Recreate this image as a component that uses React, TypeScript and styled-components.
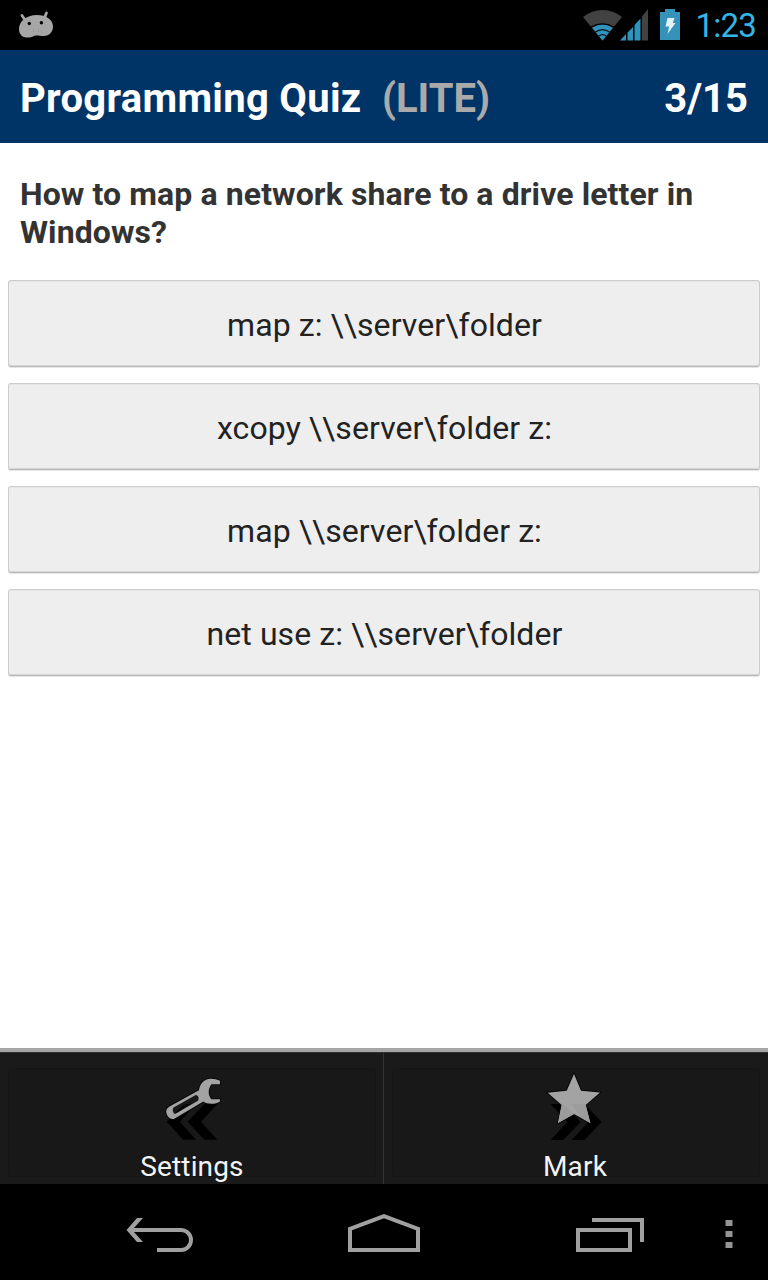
import React from "react";
import styled, { createGlobalStyle } from "styled-components";

const GlobalStyle = createGlobalStyle`
  * { box-sizing: border-box; }
  body { margin: 0; background: #fff; }
`;

const Screen = styled.div`
  width: 768px;
  height: 1280px;
  display: flex;
  flex-direction: column;
  background: #fff;
  font-family: Roboto, "Liberation Sans", sans-serif;
  overflow: hidden;
`;

const StatusBar = styled.div`
  height: 50px;
  flex: none;
  display: flex;
  align-items: center;
  justify-content: space-between;
  padding: 0 12px 0 10px;
  background: #000;
`;

const StatusIcons = styled.div`
  display: flex;
  align-items: center;
  gap: 12px;
`;

const Clock = styled.span`
  width: 64px;
  text-align: right;
  color: #33b5e5;
  font-size: 33px;
  line-height: 50px;
  letter-spacing: -0.8px;
  padding-top: 2px;
`;

const Icon = styled.svg`
  display: block;
  flex: none;
`;

const Header = styled.header`
  height: 93px;
  flex: none;
  display: flex;
  align-items: center;
  padding: 3px 20px 0;
  background: #003366;
  color: #fff;
  font-size: 40px;
  font-weight: 700;
`;

const Title = styled.span`
  letter-spacing: 0.3px;
`;

const Edition = styled.span`
  margin-left: 20.5px;
  color: #aaa;
`;

const Counter = styled.span`
  margin-left: auto;
`;

const Question = styled.h1`
  margin: 0;
  height: 129px;
  flex: none;
  padding: 32px 20px 0;
  color: #333;
  font-size: 32px;
  line-height: 38px;
  font-weight: 700;
  letter-spacing: 0.1px;
`;

const Answers = styled.div`
  flex: 1;
  display: flex;
  flex-direction: column;
  gap: 16px;
  padding: 8px 8px 0;
`;

const Answer = styled.button`
  height: 87px;
  flex: none;
  padding: 3px 0 0 1px;
  border: 1px solid #cdcdcd;
  border-bottom-color: #b9b9b9;
  border-radius: 3px;
  background: #eee;
  box-shadow: inset 0 1px 0 #e4e6e5, inset 0 -1px 0 #d6d6d6, 0 1px 0 #e6e6e6;
  color: #222;
  font-family: inherit;
  font-size: 32px;
  letter-spacing: 0.08px;
`;

const Toolbar = styled.div`
  height: 136px;
  flex: none;
  display: grid;
  grid-template-columns: 383px 385px;
  grid-template-rows: 132px;
  border-top: 4px solid #a5a5a5;
  background: #1a1a1a;
`;

const Tool = styled.div`
  display: flex;
  padding: 16px 7px 7px 8px;
  box-shadow: inset 0 1px 0 #303030;

  & + & {
    border-left: 1px solid #333;
    padding-right: 8px;
  }
`;

const ToolFace = styled.div<{ $shift?: number }>`
  flex: 1;
  height: 109px;
  display: flex;
  flex-direction: column;
  align-items: center;
  padding-right: ${({ $shift }) => $shift ?? 0}px;
  border: 1px solid #151515;
  border-radius: 3px;
  background: #181818;
  color: #f3f3f3;
  font-size: 28px;
  line-height: 34px;
`;

const ToolLabel = styled.span`
  margin-top: 9px;
  letter-spacing: 0.15px;
`;

const NavBar = styled.nav`
  height: 96px;
  flex: none;
  display: flex;
  align-items: center;
  padding: 4px 32px 0 124px;
  background: #000;
`;

const NavItem = styled.div<{ $gap?: number }>`
  margin-left: ${({ $gap }) => $gap ?? 0}px;
`;

const AndroidIcon = () => (
  <Icon width="52" height="50" viewBox="10 0 52 50">
    <path
      d="M22 15.5L25 20M46.5 13L44 19"
      stroke="#a6a6a6"
      strokeWidth="2.8"
      strokeLinecap="round"
      fill="none"
    />
    <path
      d="M19 29C19 21.5 26 15 37 15C46 15 53 19.5 53 26.5C53 32 49 36 44 36C39 36 37 35 34 36C31 37.5 28 38 25 37.3C21 36.5 19 33 19 29Z"
      fill="#a6a6a6"
    />
    <circle cx="29.3" cy="23.5" r="1.7" fill="#000" />
    <circle cx="41.4" cy="22.7" r="1.7" fill="#000" />
    <path d="M33.6 29v4M38.6 29v3" stroke="#929292" strokeWidth="1" strokeDasharray="1 1" />
  </Icon>
);

const SignalIcons = () => (
  <Icon width="66" height="50" viewBox="582 0 66 50">
    <path d="M583 17Q592 10 602.5 10Q613 10 622 17L602.5 40.5Z" fill="#424242" />
    <path d="M592.3 28Q602.5 21.2 612.7 28L602.5 40.5Z" fill="#2f93bd" />
    <path
      d="M595 32.3Q602.5 26.9 610 32.3M598.5 36.2Q602.5 33 606.5 36.2"
      stroke="#05141b"
      strokeWidth="1.2"
      fill="none"
    />
    <path d="M591 27.1Q602.5 20.8 614 27.1" stroke="#000" strokeWidth="1.2" fill="none" />
    <path
      d="M620 40.5L626 34V40.5ZM627.5 40.5V32.5L633 27V40.5ZM634.5 40.5V25L640.5 18.5V40.5Z"
      fill="#2f93bd"
    />
    <path d="M642 40.5V16.5L648 9V40.5Z" fill="#424242" />
  </Icon>
);

const BatteryIcon = () => (
  <Icon width="20" height="50" viewBox="660 0 20 50">
    <path d="M660 12H665V9H675V12H680V40H660Z" fill="#3592b9" />
    <path d="M667.5 18H674.5L672.8 23H675.5L667.5 34L669.2 26.5H665.5Z" fill="#e3f1f6" />
  </Icon>
);

const SettingsIcon = () => (
  <Icon width="64" height="72" viewBox="160 1069 64 72">
    <path
      d="M183.3 1104H196L180 1121.7L196 1139.7H183.3L166.7 1121.7ZM204.3 1104H217.3L201 1121.7L217.3 1139.7H204.3L187.7 1121.7Z"
      fill="#000"
    />
    <path
      d="M220 1080.8C216 1078.8 212 1078.3 208.5 1079C203 1080.1 199.7 1084.5 199 1090.3L169.5 1106.5C166.5 1108.2 165.7 1110.5 166.5 1113.5C167.4 1117 170.5 1119.8 174.3 1118.7L203.3 1101.5C207 1104.2 215 1104.8 220 1101.4V1099.2H211.5C207.8 1095.5 207.8 1088.5 211.5 1084.2H220Z"
      fill="#a3a3a3"
      stroke="#080808"
      strokeWidth="2"
      paintOrder="stroke"
    />
    <path
      d="M195.7 1095L174 1107.2C172 1108.5 172.4 1112.5 174.8 1114L197.5 1100.9C199.7 1099.6 198.5 1095 195.7 1095Z"
      fill="#181818"
    />
    <path d="M176.5 1111.6L184 1104.6L192 1103.6L175.6 1113.4Z" fill="#050505" />
  </Icon>
);

const MarkIcon = () => (
  <Icon width="64" height="72" viewBox="543 1069 64 72">
    <path
      d="M550.7 1104H563.3L580.7 1122L563.3 1140H550.7L567.3 1122ZM571.7 1104H584.3L601.7 1122L584.3 1140H571.7L588.3 1122Z"
      fill="#000"
    />
    <path
      d="M574 1074L581 1090.7L600 1092.5L585.7 1105L590.3 1123L574 1114L558 1123L561.7 1105L547.7 1092.7L566.7 1090.7Z"
      fill="#a3a3a3"
      stroke="#080808"
      strokeWidth="2"
      paintOrder="stroke"
    />
    <path
      d="M561.7 1105L562 1104H563.3L574 1114L558 1123ZM571.7 1104H584.3L585.7 1105L590.3 1123L582 1118.3Z"
      fill="#9c9c9c"
    />
  </Icon>
);

const BackIcon = () => (
  <Icon width="72" height="40" viewBox="124 1214 72 40">
    <path d="M129 1230H181A10 10 0 0 1 181 1250H157" fill="none" stroke="#a0a0a0" strokeWidth="4" />
    <path d="M126.5 1230L137 1218H143L132.2 1230L143 1242H137Z" fill="#a0a0a0" />
  </Icon>
);

const HomeIcon = () => (
  <Icon width="74" height="40" viewBox="347 1214 74 40">
    <path
      d="M350 1250V1229L384 1216.2L418 1229V1250Z"
      fill="none"
      stroke="#a0a0a0"
      strokeWidth="4"
    />
  </Icon>
);

const RecentsIcon = () => (
  <Icon width="70" height="40" viewBox="575 1214 70 40">
    <path
      d="M578 1230H630V1250H578ZM592 1220H642V1242"
      fill="none"
      stroke="#a0a0a0"
      strokeWidth="4"
    />
  </Icon>
);

const OverflowIcon = () => (
  <Icon width="12" height="40" viewBox="723 1214 12 40">
    <path d="M725.5 1220h7v6h-7ZM725.5 1231h7v6h-7ZM725.5 1242h7v6h-7Z" fill="#949494" />
  </Icon>
);

const answers = [
  "map z: \\\\server\\folder",
  "xcopy \\\\server\\folder z:",
  "map \\\\server\\folder z:",
  "net use z: \\\\server\\folder",
];

export default function App() {
  return (
    <>
      <GlobalStyle />
      <Screen>
        <StatusBar>
          <AndroidIcon />
          <StatusIcons>
            <SignalIcons />
            <BatteryIcon />
            <Clock>1:23</Clock>
          </StatusIcons>
        </StatusBar>
        <Header>
          <Title>Programming Quiz</Title>
          <Edition>(LITE)</Edition>
          <Counter>3/15</Counter>
        </Header>
        <Question>How to map a network share to a drive letter in Windows?</Question>
        <Answers>
          {answers.map((text) => (
            <Answer key={text}>{text}</Answer>
          ))}
        </Answers>
        <Toolbar>
          <Tool>
            <ToolFace>
              <SettingsIcon />
              <ToolLabel>Settings</ToolLabel>
            </ToolFace>
          </Tool>
          <Tool>
            <ToolFace $shift={2}>
              <MarkIcon />
              <ToolLabel>Mark</ToolLabel>
            </ToolFace>
          </Tool>
        </Toolbar>
        <NavBar>
          <NavItem>
            <BackIcon />
          </NavItem>
          <NavItem $gap={151}>
            <HomeIcon />
          </NavItem>
          <NavItem $gap={154}>
            <RecentsIcon />
          </NavItem>
          <NavItem $gap={78}>
            <OverflowIcon />
          </NavItem>
        </NavBar>
      </Screen>
    </>
  );
}
